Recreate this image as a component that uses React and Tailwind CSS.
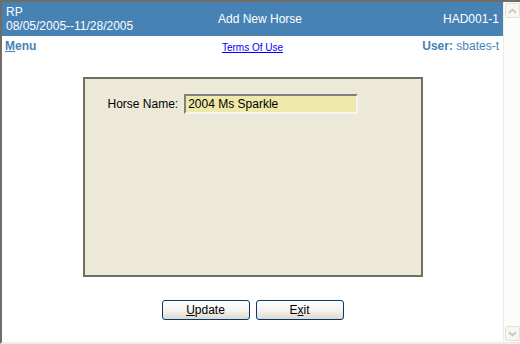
import React from 'react';

const ScrollArrow = ({ down }) => (
    <div className="w-[15px] h-[15px] rounded-[2px] border border-[#e4e2d8] bg-[#f7f6f1] flex items-center justify-center">
        <svg width="9" height="6" viewBox="0 0 9 6">
            <path
                d={down ? 'M1 1.2l3.5 3.3L8 1.2' : 'M1 4.8l3.5-3.3L8 4.8'}
                fill="none"
                stroke="#cdcbc0"
                strokeWidth="2"
            />
        </svg>
    </div>
);

const XpButton = ({ children }) => (
    <button className="w-[88px] h-[20px] rounded-[3px] border border-[#003c74] bg-linear-to-b from-white via-[#f5f4ef] to-[#dedacd] text-black text-[12px] leading-[16px]">
        {children}
    </button>
);

const App = () => {
    return (
        <div className="w-[520px] h-[344px] bg-white border-t-2 border-l-2 border-[#6f6d66] border-b-2 border-b-[#efeee6] flex overflow-hidden font-['Liberation_Sans',Arial,sans-serif] text-[12px]">
            <div className="flex-1 min-w-0 flex flex-col">
                {/* title bar */}
                <div className="h-[34px] bg-[#4682b4] text-white flex items-center">
                    <div className="w-[208px] pl-[4px] leading-[14px]">
                        <div>RP</div>
                        <div>08/05/2005--11/28/2005</div>
                    </div>
                    <div className="w-[100px] text-center whitespace-nowrap">Add New Horse</div>
                    <div className="flex-1 text-right pr-[4px]">HAD001-1</div>
                </div>

                {/* menu row */}
                <div className="h-[20px] pt-[2px] leading-[16px] grid grid-cols-[1fr_auto_1fr] text-[#4682b4]">
                    <div className="pl-[3px] font-bold">
                        <span className="underline">M</span>enu
                    </div>
                    <a href="#" className="text-[10px] text-[#0000ff] underline mt-[2px]">
                        Terms Of Use
                    </a>
                    <div className="text-right pr-[4px] whitespace-nowrap">
                        <span className="font-bold">User:</span> sbates-t
                    </div>
                </div>

                {/* form panel */}
                <div className="mx-auto mt-[21px] w-[340px] h-[200px] border-2 border-[#716f64] bg-[#ece9d8] pt-[15px] pl-[23px]">
                    <div className="flex items-center gap-[6px]">
                        <label className="text-black">Horse Name:</label>
                        <input
                            readOnly
                            defaultValue="2004 Ms Sparkle"
                            className="w-[174px] h-[20px] px-[2px] border-2 border-t-[#808080] border-l-[#808080] border-b-[#f4f3ee] border-r-[#f4f3ee] bg-[#eee8aa] text-black text-[12px] outline-none"
                        />
                    </div>
                </div>

                {/* actions */}
                <div className="mt-[23px] flex justify-center gap-[6px]">
                    <XpButton>
                        <span className="underline">U</span>pdate
                    </XpButton>
                    <XpButton>
                        E<span className="underline">x</span>it
                    </XpButton>
                </div>
            </div>

            {/* disabled scrollbar */}
            <div className="w-[17px] h-full bg-[#fcfcfa] border-l border-[#eeede7] flex flex-col justify-between items-center py-[1px]">
                <ScrollArrow />
                <ScrollArrow down />
            </div>
        </div>
    );
};

export default App;
